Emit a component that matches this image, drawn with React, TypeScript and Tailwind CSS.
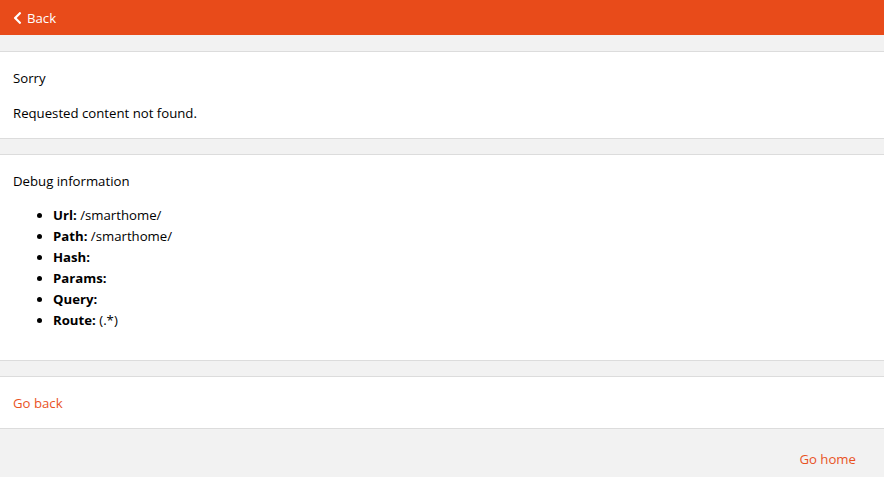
import { FaChevronLeft } from "react-icons/fa";

const items = [
  { label: "Url:", value: "/smarthome/" },
  { label: "Path:", value: "/smarthome/" },
  { label: "Hash:", value: "" },
  { label: "Params:", value: "" },
  { label: "Query:", value: "" },
  { label: "Route:", value: "(.*)" },
];

const App = () => {
  return (
    <div className="min-h-[477px] bg-[#f2f2f2] text-[13.2px] text-black font-['Open_Sans',sans-serif]">
      <div className="h-[35px] bg-[#e84b1a] flex items-center px-[13px] text-white">
        <FaChevronLeft className="w-[9px] h-[14px] mr-[5px]" />
        <span className="leading-[20px]">Back</span>
      </div>

      <div className="mt-[16px] bg-white border-y border-[#dcdcdc] px-[13px] pt-[16px] pb-[15px]">
        <p className="leading-[20px]">Sorry</p>
        <p className="leading-[20px] mt-[15px]">Requested content not found.</p>
      </div>

      <div className="mt-[15px] bg-white border-y border-[#dcdcdc] px-[13px] pt-[16px] pb-[29px]">
        <p className="leading-[20px]">Debug information</p>
        <ul className="mt-[14px] pl-[40px] list-disc">
          {items.map((item) => (
            <li key={item.label} className="leading-[21px]">
              <b className="font-bold">{item.label}</b> {item.value}
            </li>
          ))}
        </ul>
      </div>

      <div className="mt-[15px] bg-white border-y border-[#dcdcdc] px-[13px] pt-[16px] pb-[15px]">
        <p className="leading-[20px] text-[#e9531f]">Go back</p>
      </div>

      <div className="flex justify-end pt-[20px] pr-[28px]">
        <span className="leading-[20px] text-[#e9531f]">Go home</span>
      </div>
    </div>
  );
};

export default App;
